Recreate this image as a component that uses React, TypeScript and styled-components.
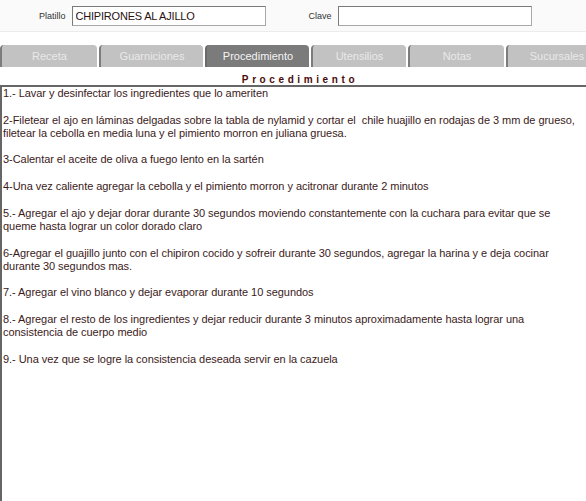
import { FC } from "react";
import styled, { createGlobalStyle } from "styled-components";

const GlobalStyle = createGlobalStyle`
  html, body {
    margin: 0;
    padding: 0;
    background: #ffffff;
    font-family: "Liberation Sans", Arial, sans-serif;
    overflow: hidden;
  }
`;

const pasos = `1.- Lavar y desinfectar los ingredientes que lo ameriten

2-Filetear el ajo en láminas delgadas sobre la tabla de nylamid y cortar el  chile huajillo en rodajas de 3 mm de grueso,
filetear la cebolla en media luna y el pimiento morron en juliana gruesa.

3-Calentar el aceite de oliva a fuego lento en la sartén

4-Una vez caliente agregar la cebolla y el pimiento morron y acitronar durante 2 minutos

5.- Agregar el ajo y dejar dorar durante 30 segundos moviendo constantemente con la cuchara para evitar que se
queme hasta lograr un color dorado claro

6-Agregar el guajillo junto con el chipiron cocido y sofreir durante 30 segundos, agregar la harina y e deja cocinar
durante 30 segundos mas.

7.- Agregar el vino blanco y dejar evaporar durante 10 segundos

8.- Agregar el resto de los ingredientes y dejar reducir durante 3 minutos aproximadamente hasta lograr una
consistencia de cuerpo medio

9.- Una vez que se logre la consistencia deseada servir en la cazuela`;

const tabs = [
  { label: "Receta", width: 97 },
  { label: "Guarniciones", width: 104 },
  { label: "Procedimiento", width: 104 },
  { label: "Utensilios", width: 95 },
  { label: "Notas", width: 96 },
  { label: "Sucursales", width: 100 },
];

const App: FC = () => {
  const activo = "Procedimiento";

  return (
    <>
      <GlobalStyle />
      <Page>
        <Header>
          <Field>
            <Label>Platillo</Label>
            <Input defaultValue="CHIPIRONES AL AJILLO" />
          </Field>
          <Field>
            <Label>Clave</Label>
            <Input defaultValue="" />
          </Field>
        </Header>

        <TabBar>
          {tabs.map((t) => (
            <Tab key={t.label} $active={t.label === activo} $width={t.width}>
              {t.label}
            </Tab>
          ))}
        </TabBar>

        <SectionTitle>Procedimiento</SectionTitle>
        <Steps readOnly defaultValue={pasos} wrap="off" />
      </Page>
    </>
  );
};

export default App;

// estilos
const Page = styled.div`
  width: 586px;
  height: 501px;
  display: flex;
  flex-direction: column;
  overflow: hidden;
`;

const Header = styled.div`
  height: 31px;
  background: #fafafa;
  border-bottom: 1px solid #ececec;
  display: flex;
  align-items: center;
  padding-left: 39px;
  gap: 43px;
`;

const Field = styled.div`
  display: flex;
  align-items: center;
  gap: 6px;
`;

const Label = styled.span`
  font-size: 9px;
  color: #333;
`;

const Input = styled.input`
  box-sizing: border-box;
  width: 194px;
  height: 20px;
  margin: 0;
  padding: 0 3px;
  border: 1px solid #a8a8a8;
  border-top-color: #7a7a7a;
  border-left-color: #7a7a7a;
  background: #fff;
  font-family: "Liberation Sans", Arial, sans-serif;
  font-size: 11px;
  letter-spacing: -0.2px;
  color: #2a1010;
  outline: none;
`;

const TabBar = styled.div`
  display: flex;
  gap: 2px;
  margin-top: 13px;
  height: 22px;
  white-space: nowrap;
`;

const Tab = styled.div<{ $active: boolean; $width: number }>`
  box-sizing: border-box;
  flex: 0 0 ${(p) => p.$width}px;
  height: 22px;
  display: flex;
  align-items: center;
  justify-content: center;
  border-radius: 4px 4px 0 0;
  border-left: 2px solid ${(p) => (p.$active ? "#6a6a6a" : "#7c7c7c")};
  background: ${(p) => (p.$active ? "#7b7b7b" : "#c2c2c2")};
  color: ${(p) => (p.$active ? "#f4f4f4" : "#e9e9e9")};
  font-size: 11px;
`;

const SectionTitle = styled.div`
  height: 18px;
  display: flex;
  align-items: flex-end;
  justify-content: center;
  padding-left: 14px;
  font-size: 10px;
  font-weight: bold;
  letter-spacing: 3.6px;
  color: #4a0b0b;
`;

const Steps = styled.textarea`
  box-sizing: border-box;
  flex: 1;
  width: 600px;
  margin: 0;
  padding: 0 1px;
  border: none;
  border-top: 2px solid #666;
  border-left: 2px solid #666;
  background: #fff;
  resize: none;
  overflow: hidden;
  white-space: pre;
  font-family: "Liberation Sans", Arial, sans-serif;
  font-size: 11px;
  line-height: 13.3px;
  letter-spacing: -0.05px;
  color: #3b1a1a;
  outline: none;
`;
